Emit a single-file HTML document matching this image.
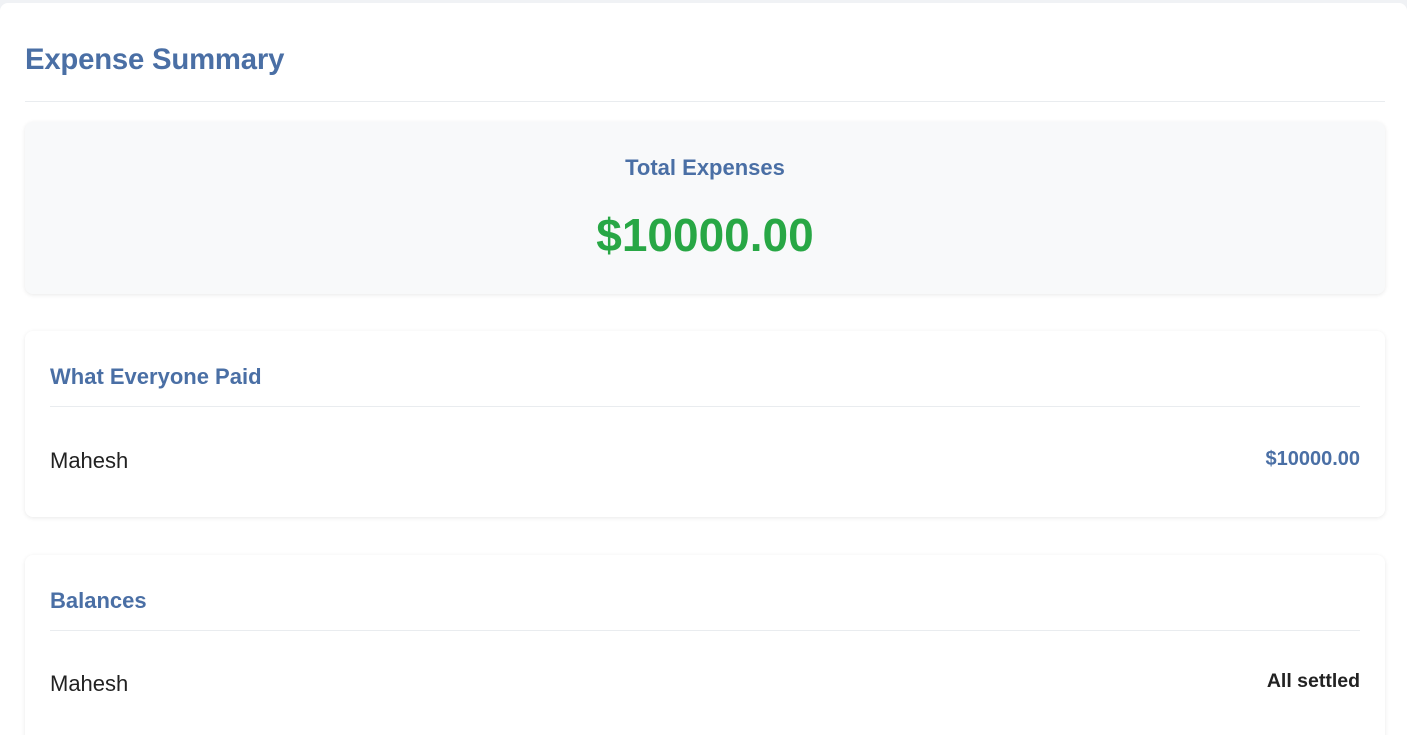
<!DOCTYPE html>
<html><head><style>
html,body{margin:0;padding:0;background:#f0f2f5;font-family:"Liberation Sans",sans-serif;width:1407px;height:735px;overflow:hidden}
.page{position:absolute;left:0;top:3px;width:1407px;height:732px;overflow:hidden;background:#fff;border-radius:8px 8px 0 0}
h1{position:absolute;left:25px;top:40px;margin:0;font-size:29.3px;color:#4a6fa5;font-weight:bold;letter-spacing:-0.2px}
.hr{position:absolute;left:25px;width:1360px;height:1px;background:#e9ecef}
.card{position:absolute;left:25px;width:1360px;border-radius:8px;box-shadow:0 1px 4px rgba(0,0,0,0.09);background:#fff}
.total{top:119px;height:172px;background:#f8f9fa;text-align:center}
.total .l{position:absolute;left:0;right:0;top:33px;font-size:22px;font-weight:bold;color:#4a6fa5}
.total .v{position:absolute;left:0;right:0;top:86px;font-size:46px;font-weight:bold;color:#28a745}
.card h2{position:absolute;left:25px;margin:0;font-size:22px;color:#4a6fa5;font-weight:bold}
.card .line{position:absolute;left:25px;right:25px;height:1px;background:#e9ecef}
.name{position:absolute;left:25px;font-size:22px;color:#222}
.amt{position:absolute;right:25px;font-size:19.5px;font-weight:bold}
</style></head><body>
<div class="page">
<h1>Expense Summary</h1>
<div class="hr" style="top:98px"></div>
<div class="card total"><div class="l">Total Expenses</div><div class="v">$10000.00</div></div>
<div class="card" style="top:328px;height:186px">
<h2 style="top:33px">What Everyone Paid</h2>
<div class="line" style="top:75px"></div>
<div class="name" style="top:117px">Mahesh</div>
<div class="amt" style="top:117px;color:#4a6fa5;font-size:20px">$10000.00</div>
</div>
<div class="card" style="top:552px;height:200px">
<h2 style="top:33px">Balances</h2>
<div class="line" style="top:75px"></div>
<div class="name" style="top:116px">Mahesh</div>
<div class="amt" style="top:115px;color:#222">All settled</div>
</div>
</div>
</body></html>
